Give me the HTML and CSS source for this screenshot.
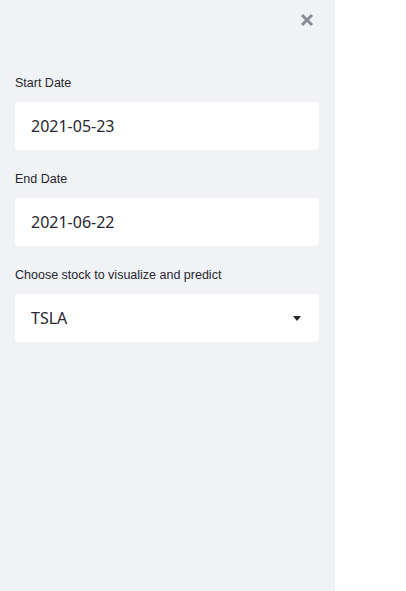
FILE: index.html
```html
<!DOCTYPE html>
<html>
<head>
<meta charset="utf-8">
<link rel="stylesheet" href="styles.css">
</head>
<body>
<div class="page">
  <aside class="sidebar">
    <div class="close-row">
      <button class="close" aria-label="Close sidebar">
        <svg width="14" height="14" viewBox="0 0 14 14"><path d="M2 2 L12 12 M12 2 L2 12" stroke="#8a8b91" stroke-width="3" stroke-linecap="butt"/></svg>
      </button>
    </div>
    <div class="fields">
      <div class="field">
        <label class="label">Start Date</label>
        <div class="box"><span class="value">2021-05-23</span></div>
      </div>
      <div class="field">
        <label class="label">End Date</label>
        <div class="box"><span class="value">2021-06-22</span></div>
      </div>
      <div class="field">
        <label class="label">Choose stock to visualize and predict</label>
        <div class="box select"><span class="value">TSLA</span>
          <svg class="caret" width="8" height="5" viewBox="0 0 8 5"><path d="M0 0 H8 L4 5 Z" fill="#262730"/></svg>
        </div>
      </div>
    </div>
  </aside>
  <main class="main"></main>
</div>
</body>
</html>
```
FILE: styles.css
```css
html, body {
  margin: 0;
  padding: 0;
  height: 100%;
  background: #ffffff;
  font-family: "Noto Sans", "Liberation Sans", sans-serif;
  color: #262730;
}
.page {
  display: flex;
  height: 100%;
}
.sidebar {
  width: 335px;
  flex: none;
  background: #f0f2f6;
  box-sizing: border-box;
  padding: 0 16px 0 15px;
  display: flex;
  flex-direction: column;
}
.close-row {
  display: flex;
  justify-content: flex-end;
  padding-top: 13px;
  padding-right: 5px;
  height: 60px;
  box-sizing: border-box;
}
.close {
  border: none;
  background: none;
  padding: 0;
  width: 14px;
  height: 14px;
  display: block;
}
.close svg { display: block; }
.fields {
  display: flex;
  flex-direction: column;
  gap: 19px;
  padding-top: 13px;
}
.field {
  display: flex;
  flex-direction: column;
  gap: 9px;
}
.label {
  font-family: "Liberation Sans", Arial, sans-serif;
  font-size: 12.5px;
  line-height: 21px;
  height: 20px;
  color: #262730;
}
.box {
  height: 48px;
  background: #ffffff;
  border-radius: 4px;
  display: flex;
  align-items: center;
  padding: 0 16px;
  box-sizing: border-box;
}
.value {
  font-size: 16px;
  color: #262730;
}
.select {
  justify-content: space-between;
  padding-right: 18px;
}
.caret { display: block; }
.main { flex: 1; }
```
